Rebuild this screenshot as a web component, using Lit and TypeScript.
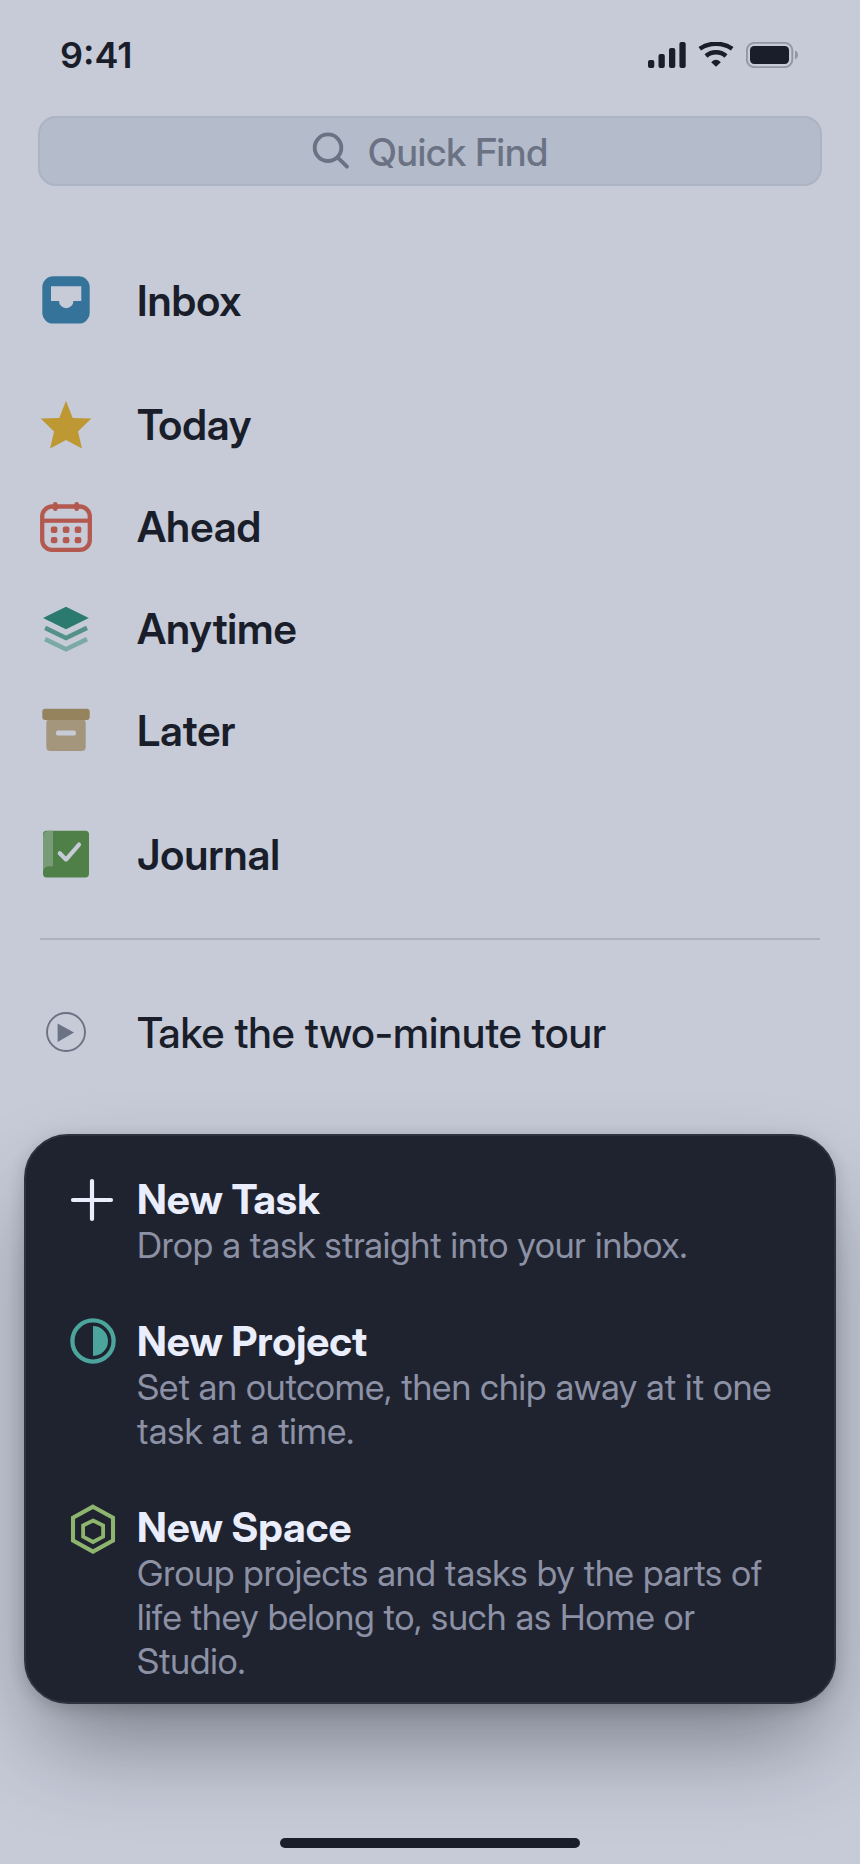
import { LitElement, html, css, svg, type TemplateResult } from "lit";
import { customElement, property } from "lit/decorators.js";

type IconName =
  | "inbox" | "today" | "ahead" | "anytime" | "later" | "journal"
  | "play" | "plus" | "project" | "space";

const GLYPHS: Record<IconName, TemplateResult> = {
  inbox: svg`
    <rect x="2.3" y="2.2" width="47.4" height="47.4" rx="11" fill="#36739a"/>
    <path d="M11 12.3H41.3V27H33.4A7.2 7.2 0 0 1 19 27H11Z" fill="#c7cbd8"/>`,
  today: svg`
    <path d="M26 2.7 32.7 20 51.3 20.4 38 33.5 42 50.6 26 42 10.1 50.6 14 33.5 .7 20.4 19.3 20Z" fill="#bd9833"/>`,
  ahead: svg`
    <g fill="#b3594f">
      <rect x="2.2" y="6.5" width="47.6" height="43.4" rx="10" fill="none" stroke="#b3594f" stroke-width="4.3"/>
      <rect x="2" y="18.6" width="48" height="4.2"/>
      <rect x="13" y="2" width="4.6" height="9" rx="2.2"/>
      <rect x="34.4" y="2" width="4.6" height="9" rx="2.2"/>
      <rect x="12.2" y="5.2" width="6.2" height="3.6" rx="1.4"/>
      <rect x="33.6" y="5.2" width="6.2" height="3.6" rx="1.4"/>
      ${[10.8, 22.8, 34.7].map((x) => [26.5, 36.9].map((y) => svg`<rect x=${x} y=${y} width="6.6" height="6.4" rx="2"/>`))}
    </g>`,
  anytime: svg`
    <path d="M26 4.7 48.8 16 26 27.2 3 16Z" fill="#2b7a6f"/>
    <path d="M6 23.7 26 33.4 46.1 23.7 48 28 26 38.4 4.2 28Z" fill="#549188"/>
    <path d="M6 35 26 44.7 46.1 35 48 39.3 26 49.8 4.2 39.3Z" fill="#7ba9a5"/>`,
  later: svg`
    <rect x="6.3" y="15" width="39.4" height="32" rx="4" fill="#a4967c"/>
    <rect x="2.3" y="4.7" width="47.4" height="11.4" rx="3" fill="#95835e"/>
    <rect x="16" y="26.4" width="20" height="5.2" rx="2.2" fill="#c7cbd8"/>`,
  journal: svg`
    <rect x="3" y="2.8" width="46" height="46.6" rx="3.6" fill="#4f8048"/>
    <path d="M13 2.8H8.5A5.5 5.5 0 0 0 3 8.3V43.5Q3.6 38.6 9 38.2H13Z" fill="#779c76"/>
    <path d="M19.8 25.2 26 31.6 39 16.6" fill="none" stroke="#c7cbd8" stroke-width="4.2" stroke-linecap="round" stroke-linejoin="round"/>`,
  play: svg`
    <circle cx="26" cy="26" r="19" fill="none" stroke="#6b7284" stroke-width="1.9"/>
    <path d="M17.6 17.6 34 26.6 17.6 36Z" fill="#6b7284"/>`,
  plus: svg`
    <path d="M23 6V44M4 25H42" fill="none" stroke="#e9edfc" stroke-width="4.2" stroke-linecap="round"/>`,
  project: svg`
    <circle cx="24" cy="24" r="20.6" fill="none" stroke="#4ba59d" stroke-width="4.3"/>
    <path d="M24 9A15 15 0 0 1 24 39Z" fill="#4ba59d"/>`,
  space: svg`
    <g fill="none" stroke="#8eb56e">
      <path d="M24 3.7 44 14.6V37.6L24 48.6 4 37.6V14.6Z" stroke-width="4.1"/>
      <path d="M24 17.5 34.1 22.5V33.6L24 39 14.1 33.6V22.5Z" stroke-width="3.8"/>
    </g>`,
};

@customElement("app-icon")
export class AppIcon extends LitElement {
  @property() name: IconName = "inbox";
  @property({ type: Number }) size = 52;

  static styles = css`
    :host { display: block; flex: none; }
    .glyph { display: block; overflow: visible; }
  `;

  render() {
    return html`<svg class="glyph" width=${this.size} height=${this.size}
      viewBox="0 0 ${this.size} ${this.size}" aria-hidden="true">${GLYPHS[this.name]}</svg>`;
  }
}

interface ListEntry { label: string; icon: IconName; }
interface Action { title: string; text: string; icon: IconName; }

const GROUPS: ListEntry[][] = [
  [{ label: "Inbox", icon: "inbox" }],
  [
    { label: "Today", icon: "today" },
    { label: "Ahead", icon: "ahead" },
    { label: "Anytime", icon: "anytime" },
    { label: "Later", icon: "later" },
  ],
  [{ label: "Journal", icon: "journal" }],
];

const ACTIONS: Action[] = [
  { title: "New Task", text: "Drop a task straight into your inbox.", icon: "plus" },
  { title: "New Project", text: "Set an outcome, then chip away at it one task at a time.", icon: "project" },
  { title: "New Space", text: "Group projects and tasks by the parts of life they belong to, such as Home or Studio.", icon: "space" },
];

@customElement("app-root")
export class AppRoot extends LitElement {
  static styles = css`
    :host {
      display: flex;
      flex-direction: column;
      box-sizing: border-box;
      min-height: 100vh;
      padding-bottom: 16px;
      background: #c7cbd8;
      color: #191e2a;
      font-family: "Inter Display", Inter, "Liberation Sans", sans-serif;
    }
    .status {
      display: flex;
      align-items: center;
      justify-content: space-between;
      height: 110px;
      padding: 0 62px 0 60px;
      font-family: Inter, "Liberation Sans", sans-serif;
      font-size: 36px;
      font-weight: 600;
    }
    .indicators { display: flex; gap: 12px; }
    .search {
      display: flex;
      align-items: center;
      justify-content: center;
      gap: 18px;
      box-sizing: border-box;
      height: 70px;
      margin: 6px 38px 0;
      border: 2px solid #acb3c3;
      border-radius: 18px;
      background: #b4bccc;
      color: #6b7283;
    }
    .search-icon { flex: none; }
    .query {
      field-sizing: content;
      min-width: 0;
      padding: 2px 0 0;
      border: 0;
      outline: 0;
      background: none;
      color: inherit;
      font: 500 38px/44px "Inter Display", Inter, "Liberation Sans", sans-serif;
    }
    .query::placeholder { color: inherit; opacity: 1; }
    .lists {
      display: flex;
      flex-direction: column;
      gap: 22px;
      margin-top: 63px;
      padding: 0 40px;
    }
    .group { margin: 0; padding: 0; list-style: none; }
    .row {
      display: flex;
      align-items: center;
      gap: 45px;
      height: 102px;
      color: inherit;
      font-size: 42px;
      font-weight: 600;
      text-decoration: none;
    }
    .rule { height: 2px; margin: 33px 40px 41px; border: 0; background: #acb1bf; }
    .tour { margin: 0 40px; font-weight: 500; }
    .sheet {
      display: flex;
      flex-direction: column;
      gap: 50px;
      margin: 51px 24px 0;
      padding: 39px 34px 19px 43px;
      border: 2px solid #2d323e;
      border-radius: 44px;
      background: #1f232f;
      box-shadow: 0 48px 96px -16px rgba(20, 22, 30, 0.46), 0 4px 16px rgba(20, 22, 30, 0.18);
    }
    .action {
      display: flex;
      align-items: flex-start;
      gap: 20px;
      padding: 0;
      border: 0;
      background: none;
      font: inherit;
      text-align: left;
    }
    .words { display: flex; flex-direction: column; }
    .title { color: #e9edfc; font-size: 41px; font-weight: 700; line-height: 48px; }
    .text { color: #8c91a5; font-size: 36px; line-height: 44px; }
    .home {
      width: 300px;
      height: 10px;
      margin: auto auto 0;
      border-radius: 5px;
      background: #191e2a;
    }
  `;

  private renderStatus() {
    return html`
      <header class="status">
        <span>9:41</span>
        <div class="indicators">
          <svg width="38" height="26" viewBox="0 0 38 26" fill="#191e2a" aria-label="Signal">
            <rect x="0" y="18" width="6.3" height="8" rx="2"/>
            <rect x="10.5" y="12" width="6.3" height="14" rx="2"/>
            <rect x="21" y="6" width="6.3" height="20" rx="2"/>
            <rect x="31.4" y="0" width="6.3" height="26" rx="2"/>
          </svg>
          <svg width="36" height="26" viewBox="0 0 36 26" aria-label="Wi-Fi">
            <g fill="none" stroke="#191e2a" stroke-width="4.4">
              <path d="M1.8 6.8C11 .1 25 .1 34.2 6.8"/>
              <path d="M8 14C13.6 8.9 22.4 8.9 28 14"/>
            </g>
            <path d="M13.2 20.2Q18 15.4 22.8 20.2L18 24.8Z" fill="#191e2a"/>
          </svg>
          <svg width="52" height="26" viewBox="0 0 52 26" aria-label="Battery">
            <rect x=".9" y=".9" width="45.4" height="24.2" rx="7.4" fill="none" stroke="#9297a5" stroke-width="1.9"/>
            <rect x="4" y="4.1" width="39" height="17.8" rx="4.2" fill="#191e2a"/>
            <path d="M49 8.6Q52 10 52 13T49 17.4Z" fill="#9297a5"/>
          </svg>
        </div>
      </header>`;
  }

  private renderRow(entry: ListEntry) {
    return html`
      <li>
        <a class="row" href="#${entry.icon}">
          <app-icon name=${entry.icon}></app-icon>
          <span>${entry.label}</span>
        </a>
      </li>`;
  }

  private renderAction(action: Action) {
    return html`
      <button class="action" type="button">
        <app-icon name=${action.icon} size="48"></app-icon>
        <span class="words">
          <span class="title">${action.title}</span>
          <span class="text">${action.text}</span>
        </span>
      </button>`;
  }

  render() {
    return html`
      ${this.renderStatus()}
      <label class="search">
        <svg class="search-icon" width="38" height="38" viewBox="0 0 38 38" fill="none"
          stroke="currentColor" stroke-width="3.9" stroke-linecap="round" aria-hidden="true">
          <circle cx="16" cy="15.7" r="13.3"/>
          <path d="M25.8 25.6 35 34.6"/>
        </svg>
        <input class="query" type="text" placeholder="Quick Find" aria-label="Quick Find" />
      </label>
      <nav class="lists">
        ${GROUPS.map((group) => html`<ul class="group">${group.map((e) => this.renderRow(e))}</ul>`)}
      </nav>
      <hr class="rule" />
      <a class="row tour" href="#tour">
        <app-icon name="play"></app-icon>
        <span>Take the two-minute tour</span>
      </a>
      <section class="sheet">${ACTIONS.map((a) => this.renderAction(a))}</section>
      <div class="home"></div>`;
  }
}
